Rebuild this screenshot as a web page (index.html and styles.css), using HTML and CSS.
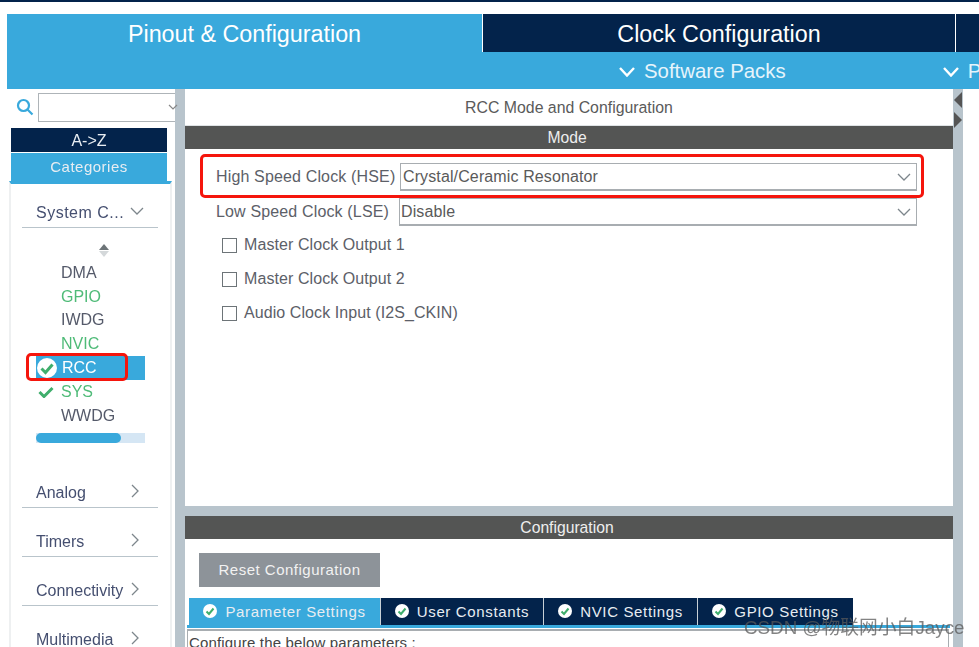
FILE: index.html
```html
<!DOCTYPE html>
<html lang="en">
<head>
<meta charset="utf-8">
<title>RCC Mode and Configuration</title>
<link rel="stylesheet" href="styles.css">
</head>
<body>
<div class="app">
  <div class="topstrip"></div>
  <header class="header">
    <div class="tabs">
      <div class="maintab active">Pinout &amp; Configuration</div>
      <div class="maintab">Clock Configuration</div>
      <div class="maintab stub"></div>
    </div>
    <div class="subbar">
      <div class="subitem first">
        <svg class="subchev" viewBox="0 0 16 10"><path d="M1 1 8 8.5 15 1"/></svg>
        <span>Software Packs</span>
      </div>
      <div class="subitem second">
        <svg class="subchev" viewBox="0 0 16 10"><path d="M1 1 8 8.5 15 1"/></svg>
        <span>P</span>
      </div>
    </div>
  </header>
  <main class="main">
    <aside class="sidebar">
      <div class="search">
        <svg class="searchicon" viewBox="0 0 18 18"><circle cx="7.5" cy="7.5" r="5.5"/><path d="M11.5 11.5 16.5 16.5"/></svg>
        <div class="searchbox"><svg class="searchchev" viewBox="0 0 10 6"><path d="M1 1l4 4 4-4"/></svg></div>
      </div>
      <div class="sorttab">A-&gt;Z</div>
      <div class="sorttab on">Categories</div>
      <div class="catpanel">
        <div class="cat open">
          <span>System C...</span>
          <svg class="chev" viewBox="0 0 14 9"><path d="M1 1l6 6 6-6"/></svg>
        </div>
        <div class="scrollup"><i class="tri up"></i><i class="tri down"></i></div>
        <ul class="list">
          <li class="item">DMA</li>
          <li class="item green">GPIO</li>
          <li class="item">IWDG</li>
          <li class="item green">NVIC</li>
          <li class="item selected">
            <svg class="okbig" viewBox="0 0 20 20"><circle cx="10" cy="10" r="10" fill="#fff"/><path d="M4.5 10.5 8.5 14.5 15.5 6.5" fill="none" stroke="#3fae6c" stroke-width="3"/></svg>
            RCC
          </li>
          <li class="item green">
            <svg class="oksmall" viewBox="0 0 16 12"><path d="M1.5 6 6 10.5 14.5 2" fill="none" stroke="#3fae6c" stroke-width="3"/></svg>
            SYS
          </li>
          <li class="item">WWDG</li>
        </ul>
        <div class="hscroll"><div class="hthumb"></div></div>
        <div class="cat closed a"><span>Analog</span><svg class="chev side" viewBox="0 0 9 14"><path d="M1 1l6 6-6 6"/></svg></div>
        <div class="cat closed"><span>Timers</span><svg class="chev side" viewBox="0 0 9 14"><path d="M1 1l6 6-6 6"/></svg></div>
        <div class="cat closed"><span>Connectivity</span><svg class="chev side" viewBox="0 0 9 14"><path d="M1 1l6 6-6 6"/></svg></div>
        <div class="cat closed"><span>Multimedia</span><svg class="chev side" viewBox="0 0 9 14"><path d="M1 1l6 6-6 6"/></svg></div>
      </div>
    </aside>
    <section class="center">
      <div class="paneltitle">RCC Mode and Configuration</div>
      <div class="bar">Mode</div>
      <div class="modebody">
        <div class="formrow">
          <label class="fieldlabel">High Speed Clock (HSE)</label>
          <div class="select hse">Crystal/Ceramic Resonator<svg class="selchev" viewBox="0 0 14 8"><path d="M1 1l6 6 6-6"/></svg></div>
        </div>
        <div class="formrow lse">
          <label class="fieldlabel">Low Speed Clock (LSE)</label>
          <div class="select">Disable<svg class="selchev" viewBox="0 0 14 8"><path d="M1 1l6 6 6-6"/></svg></div>
        </div>
        <div class="check first"><i class="box"></i>Master Clock Output 1</div>
        <div class="check"><i class="box"></i>Master Clock Output 2</div>
        <div class="check"><i class="box"></i>Audio Clock Input (I2S_CKIN)</div>
      </div>
      <div class="bar config">Configuration</div>
      <div class="configbody">
        <div class="resetbtn">Reset Configuration</div>
        <div class="subtabs">
          <div class="subtab on w1"><svg class="tabok" viewBox="0 0 14 14"><circle cx="7" cy="7" r="7" fill="#fff"/><path d="M3.5 7.5 6 10 10.5 4.5" fill="none" stroke="#3fae6c" stroke-width="2"/></svg>Parameter Settings</div>
          <div class="subtab w2"><svg class="tabok" viewBox="0 0 14 14"><circle cx="7" cy="7" r="7" fill="#fff"/><path d="M3.5 7.5 6 10 10.5 4.5" fill="none" stroke="#3fae6c" stroke-width="2"/></svg>User Constants</div>
          <div class="subtab w3"><svg class="tabok" viewBox="0 0 14 14"><circle cx="7" cy="7" r="7" fill="#fff"/><path d="M3.5 7.5 6 10 10.5 4.5" fill="none" stroke="#3fae6c" stroke-width="2"/></svg>NVIC Settings</div>
          <div class="subtab w4"><svg class="tabok" viewBox="0 0 14 14"><circle cx="7" cy="7" r="7" fill="#fff"/><path d="M3.5 7.5 6 10 10.5 4.5" fill="none" stroke="#3fae6c" stroke-width="2"/></svg>GPIO Settings</div>
        </div>
        <div class="tabline"></div>
        <div class="params">Configure the below parameters :</div>
      </div>
    </section>
    <div class="rightrail">
      <i class="railtri left"></i>
      <i class="railtri right"></i>
    </div>
  </main>
</div>
<div class="redbox redhse"></div>
<div class="redbox redrcc"></div>
<div class="watermark">CSDN @物联网小白Jayce</div>
</body>
</html>
```
FILE: styles.css
```css
* { box-sizing: border-box; }
html, body { margin: 0; height: 100%; background: #fff; overflow: hidden; }
body { font-family: "Liberation Sans", Arial, sans-serif; position: relative; color: #555; }
.app { width: 979px; height: 647px; display: flex; flex-direction: column; overflow: hidden; filter: blur(0.35px); }
.topstrip { height: 2px; background: #03234b; flex: none; margin-bottom: 12px; }

.header { margin-left: 7px; flex: none; background: #39a9dc; height: 75px; display: flex; flex-direction: column; }
.tabs { display: flex; height: 38px; }
.maintab { font-size: 23.3px; color: #fff; background: #03234b; display: flex; align-items: center; justify-content: center; height: 38px; border-left: 1px solid #fff; width: 473px; padding-top: 3px; }
.maintab.active { background: #39a9dc; width: 475px; border-left: 0; }
.maintab.stub { flex: 1; width: auto; }
.subbar { height: 37px; position: relative; display: flex; align-items: center; color: #e6f4fb; font-size: 20.4px; padding-left: 612px; padding-top: 2px; overflow: hidden; }
.subitem { display: flex; align-items: center; gap: 9px; flex: none; white-space: nowrap; }
.subitem.second { margin-left: 157px; }
.subchev { width: 16px; height: 10px; fill: none; stroke: #fff; stroke-width: 2.4; }

.main { flex: 1; display: flex; min-height: 0; }

.sidebar { width: 175px; flex: none; background: #fff; display: flex; flex-direction: column; box-shadow: 10px 0 0 #b8c4cc; }
.search { display: flex; align-items: center; height: 30px; margin-top: 3px; padding-left: 16px; gap: 4px; }
.searchicon { width: 18px; height: 18px; fill: none; stroke: #39a9dc; stroke-width: 2.2; }
.searchbox { flex: 1; height: 29px; border: 1px solid #aeb4b8; position: relative; display: flex; align-items: center; justify-content: flex-end; border-right: 0; }
.searchchev { width: 10px; height: 6px; fill: none; stroke: #888; stroke-width: 1.2; margin-right: -3px; }
.sorttab { margin: 6px 8px 0 11px; height: 24px; background: #03234b; color: #e8edf2; font-size: 16px; display: flex; align-items: center; justify-content: center; padding-top: 1px; }
.sorttab.on { margin-top: 1px; height: 28px; background: #39a9dc; font-size: 15px; letter-spacing: 0.5px; padding: 0 0 1px; }
.catpanel { margin: 0 3px 0 9px; flex: 1; border-top: 3px solid #39a9dc; border-left: 2px solid #eef0f1; border-right: 2px solid #eef0f1; padding-top: 20px; min-height: 0; }
.cat { margin-left: 11px; width: 136px; display: flex; align-items: center; justify-content: space-between; color: #454f70; font-size: 16px; border-bottom: 1px solid #b9c4cb; padding: 0 14px 5px 14px; height: 24px; }
.cat.open span { letter-spacing: 0.5px; }
.cat.closed { height: 34px; margin-top: 15px; padding-right: 9px; padding-bottom: 5px; align-items: flex-end; }
.cat.closed.a { margin-top: 31px; }
.cat.closed .chev { margin-bottom: 4px; }
.chev { width: 14px; height: 9px; fill: none; stroke: #7d868c; stroke-width: 1.3; margin-top: -4px; flex: none; }
.chev.side { width: 9px; height: 14px; margin-right: 9px; margin-left: auto; }
.scrollup { display: flex; flex-direction: column; align-items: center; width: 8px; margin: 16px 0 0 89px; gap: 1px; }
.tri { display: block; width: 0; height: 0; border-left: 5px solid transparent; border-right: 5px solid transparent; }
.tri.up { border-bottom: 6px solid #6d7478; }
.tri.down { border-top: 6px solid #d4d8da; }
.list { list-style: none; margin: 4px 0 0; padding: 0; }
.item { height: 23.8px; margin-left: 25px; width: 109px; padding-left: 25px; font-size: 16px; color: #555a6a; display: flex; align-items: center; position: relative; }
.item.green { color: #4fbb78; }
.item.selected { background: #39a9dc; color: #fff; padding-left: 26px; }
.okbig { position: absolute; left: 1px; top: 2px; width: 20px; height: 20px; }
.oksmall { position: absolute; left: 2px; top: 6px; width: 16px; height: 12px; }
.hscroll { margin: 5px 0 0 25px; width: 109px; height: 10px; background: #d5e6f4; }
.hthumb { width: 85px; height: 10px; border-radius: 5px; background: #39a9dc; }

.center { width: 768px; margin-left: 10px; flex: none; background: #fff; display: flex; flex-direction: column; position: relative; }
.paneltitle { height: 37px; display: flex; align-items: center; justify-content: center; font-size: 15.85px; color: #5a5a5a; border-bottom: 1px solid #dfe3e5; padding-top: 1px; }
.bar { height: 23px; background: #545554; color: #eee; font-size: 15.7px; display: flex; align-items: center; justify-content: center; flex: none; padding-right: 4px; }
.modebody { height: 343px; padding: 14px 36px 0 31px; border-bottom: 10px solid #b8c4cc; box-sizing: content-box; }
.formrow { display: flex; align-items: center; height: 28px; }
.formrow.lse { margin-top: 7px; }
.fieldlabel { font-size: 16px; width: 184px; letter-spacing: 0.15px; flex: none; color: #5c6068; }
.formrow.lse .fieldlabel { width: 183px; }
.select { flex: 1; height: 28px; border: 1px solid #a8adb1; border-bottom-width: 2px; font-size: 16px; letter-spacing: 0.12px; color: #5a5a5a; display: flex; align-items: center; justify-content: space-between; padding: 0 5px 0 1px; }
.select.hse { padding-left: 2px; }
.selchev { width: 14px; height: 8px; fill: none; stroke: #7d868c; stroke-width: 1.3; flex: none; }
.check { display: flex; align-items: center; gap: 7px; height: 20px; margin: 14px 0 0 6px; font-size: 16px; letter-spacing: 0.08px; color: #5c6068; }
.check.first { margin-top: 9px; }
.box { width: 15px; height: 15px; border: 1px solid #6d7478; flex: none; }
.configbody { flex: 1; padding: 14px 0 0 2px; min-height: 0; position: relative; }
.resetbtn { margin-left: 12px; width: 181px; height: 34px; background: #8d9399; color: #f2f2f2; font-size: 15px; letter-spacing: 0.5px; display: flex; align-items: center; justify-content: center; padding-bottom: 1px; }
.subtabs { display: flex; margin: 11px 0 0 2px; height: 27px; }
.subtab { background: #03234b; color: #e8edf2; font-size: 15px; letter-spacing: 0.65px; display: flex; align-items: center; justify-content: center; gap: 8px; border-left: 1px solid #c8d0d6; padding-bottom: 1px; }
.subtab.on { background: #39a9dc; border-left: 0; }
.w1 { width: 191px; } .w2 { width: 163px; } .w3 { width: 154px; } .w4 { width: 156px; }
.tabok { width: 14px; height: 14px; flex: none; }
.tabline { height: 3px; background: #39a9dc; width: 763px; }
.params { margin-top: 1px; width: 762px; height: 40px; border: 1px solid #a8adb1; border-top-width: 2px; font-size: 15px; color: #444; padding: 3px 0 0 1px; letter-spacing: 0.16px; }

.rightrail { width: 10px; flex: none; background: #b8c4cc; position: relative; }
.railtri { position: absolute; left: 1px; width: 0; height: 0; border-top: 8px solid transparent; border-bottom: 8px solid transparent; }
.railtri.left { top: 3px; border-right: 8px solid #555; }
.railtri.right { top: 23px; border-left: 8px solid #555; }

.redbox { position: absolute; border: 3.5px solid #f5150c; border-radius: 5px; pointer-events: none; }
.redhse { left: 200px; top: 154px; width: 724px; height: 44px; }
.redrcc { left: 26px; top: 353px; width: 102px; height: 28px; }
.watermark { position: absolute; left: 744px; top: 612px; font-size: 18.8px; color: rgba(90, 90, 90, 0.75); font-family: "Liberation Sans", "Noto Sans CJK SC", sans-serif; white-space: nowrap; }
```
